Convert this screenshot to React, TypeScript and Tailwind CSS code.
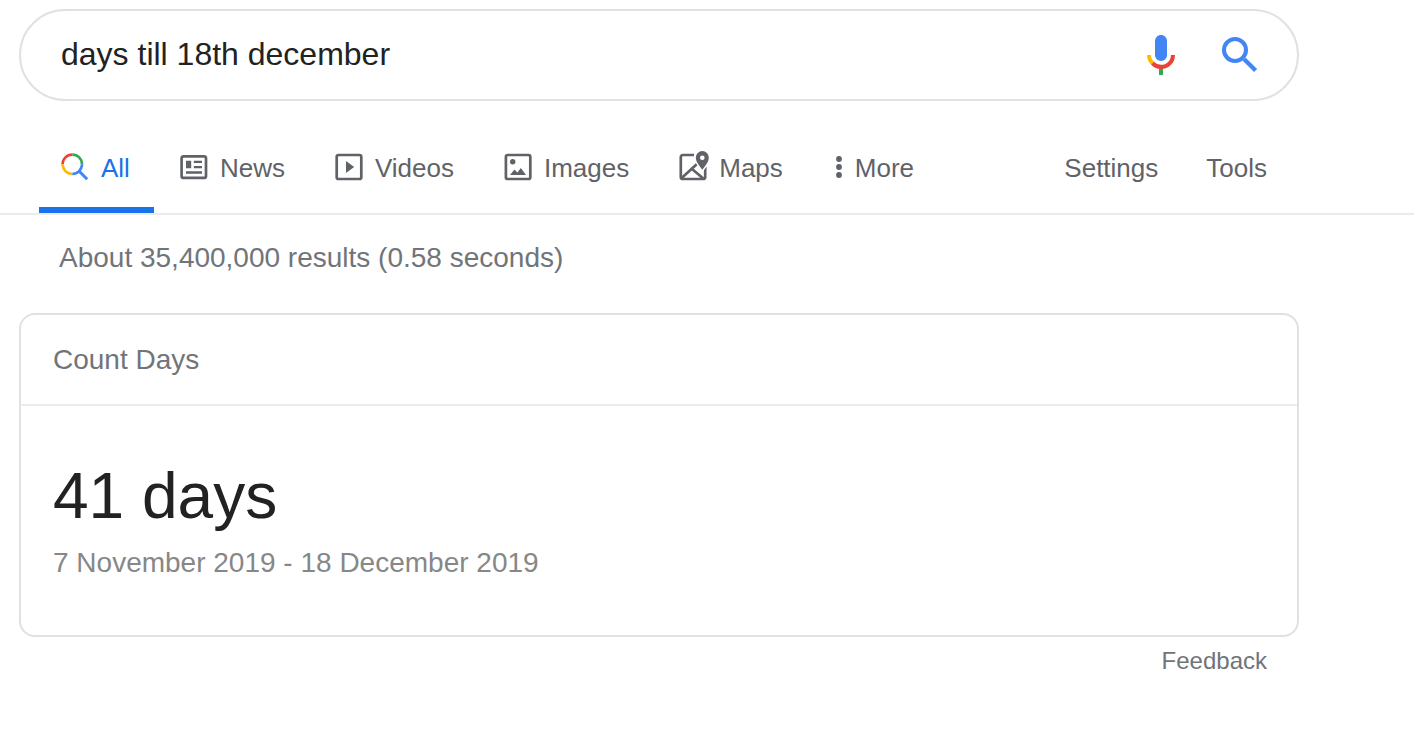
import type { ReactNode } from "react";

function MicIcon() {
  return (
    <svg className="size-12" viewBox="0 0 24 24" aria-hidden="true">
      <path fill="#4285f4" d="M12 15c1.66 0 3-1.31 3-2.97V4.99C15 3.33 13.66 2 12 2S9 3.33 9 4.99v7.04C9 13.69 10.34 15 12 15z" />
      <path fill="#34a853" d="M11 18.08h2V22h-2z" />
      <path fill="#fbbc05" d="M7.05 16.87C5.78 15.54 5 14.04 5 12h2c0 1.45.56 2.42 1.47 3.38v.32l-1.15 1.18z" />
      <path fill="#ea4335" d="M12 16.93a4.97 5.25 0 0 1-3.54-1.55l-1.41 1.49C8.31 18.21 10.07 19 12 19c3.87 0 6.99-2.92 6.99-7H17c0 2.92-2.24 4.93-5 4.93z" />
    </svg>
  );
}

function SearchIcon() {
  return (
    <svg className="size-12" viewBox="0 0 24 24" fill="none" stroke="#4285f4" aria-hidden="true">
      <circle cx="9.5" cy="9.5" r="5.5" strokeWidth="2" />
      <path d="M14.100 14.100l5.700 5.700" strokeWidth="2.150" />
    </svg>
  );
}

function Glyph({ children }: { children: ReactNode }) {
  return (
    <svg className="-mt-0.5 size-8 shrink-0" viewBox="0 0 32 32" fill="none" aria-hidden="true">
      {children}
    </svg>
  );
}

const allIcon = (
  <Glyph>
    <path d="M3.6 13.3a9.7 9.7 0 0 1 9.7-9.7" stroke="#ea4335" strokeWidth="2.6" />
    <path d="M13.3 3.6a9.7 9.7 0 0 1 9.7 9.7" stroke="#34a853" strokeWidth="2.6" />
    <path d="M13.3 23a9.7 9.7 0 0 1-9.7-9.7" stroke="#fbbc05" strokeWidth="2.6" />
    <path d="M23 13.3a9.7 9.7 0 0 1-9.7 9.7" stroke="#4285f4" strokeWidth="2.6" />
    <path d="M19.700 19.700l8.500 8.500" stroke="#4285f4" strokeWidth="3" />
  </Glyph>
);

const newsIcon = (
  <Glyph>
    <rect x="3.6" y="5.3" width="24.4" height="21.6" rx="2" stroke="#5f6368" strokeWidth="2.7" />
    <path fill="#5f6368" d="M8 9.7h5.2v7.6H8zM15.8 9.7H24V12h-8.2zM15.8 15H24v2.3h-8.2zM8 20.3h16v2.5H8z" />
  </Glyph>
);

const videosIcon = (
  <Glyph>
    <rect x="3.7" y="4" width="24.6" height="24" rx="1.8" stroke="#5f6368" strokeWidth="2.7" />
    <path fill="#5f6368" d="M13 10l8.2 6-8.2 6z" />
  </Glyph>
);

const imagesIcon = (
  <Glyph>
    <rect x="3.9" y="4" width="24.4" height="24" rx="1.8" stroke="#5f6368" strokeWidth="2.7" />
    <circle cx="10.7" cy="10.7" r="2.7" fill="#5f6368" />
    <path fill="#5f6368" d="M8 24l4.4-5.6 3 3.2 3.4-4.6L24 24z" />
  </Glyph>
);

const mapsIcon = (
  <Glyph>
    <path
      d="M17 4H5.8a2 2 0 0 0-2 2v20a2 2 0 0 0 2 2h20.400a2 2 0 0 0 2-2V16M4.400 27.200L20 13M13.800 17l12.500 10.500"
      stroke="#5f6368"
      strokeWidth="2.700"
    />
    <path
      d="M25.300 18.800c-3-3.900-6.500-8-6.500-12.200a6.500 6.500 0 0 1 13 0c0 4.200-3.500 8.300-6.500 12.200z"
      fill="#5f6368"
      stroke="#fff"
      strokeWidth="3"
      paintOrder="stroke"
    />
    <circle cx="25.300" cy="6.700" r="2.300" fill="#fff" />
  </Glyph>
);

const tabs = [
  { label: "News", icon: newsIcon },
  { label: "Videos", icon: videosIcon },
  { label: "Images", icon: imagesIcon },
  { label: "Maps", icon: mapsIcon },
];

const tabClass = "flex items-center gap-2.5 border-b-[6px] border-transparent px-6 pb-[21px]";

export default function App() {
  return (
    <div className="min-h-screen bg-white pt-[9px] font-['Liberation_Sans',Arial,sans-serif] text-[#222]">
      <form
        role="search"
        onSubmit={(event) => event.preventDefault()}
        className="ml-[19px] flex h-[92px] max-w-[1280px] items-center rounded-full border-2 border-[#dfe1e5] pr-[33px] pl-10"
      >
        <input
          type="text"
          aria-label="Search"
          defaultValue="days till 18th december"
          className="min-w-0 flex-1 bg-transparent pb-0.5 text-[32px] leading-10 outline-none"
        />
        <div className="flex gap-[31px]">
          <button type="button" aria-label="Search by voice">
            <MicIcon />
          </button>
          <button type="submit" aria-label="Submit search">
            <SearchIcon />
          </button>
        </div>
      </form>

      <div className="border-b-2 border-[#ebebeb] pt-[49px] text-[26px] leading-9 text-[#5f6368]">
        <div className="ml-[19px] flex max-w-[1280px] justify-between pr-8 pl-5">
          <nav aria-label="Result types" className="flex">
            <a
              href="#all"
              aria-current="page"
              className="flex items-center gap-2.5 border-b-[6px] border-[#1a73e8] pr-6 pb-[21px] pl-5 text-[#1a73e8]"
            >
              {allIcon}
              All
            </a>
            {tabs.map((tab) => (
              <a key={tab.label} href={`#${tab.label.toLowerCase()}`} className={tabClass}>
                {tab.icon}
                {tab.label}
              </a>
            ))}
            <button type="button" className="flex items-center gap-2 border-b-[6px] border-transparent pb-[21px] pl-6">
              <svg className="-mt-0.5 h-8 w-4 shrink-0" viewBox="0 0 16 32" fill="#5f6368" aria-hidden="true">
                <circle cx="8" cy="8" r="2.900" />
                <circle cx="8" cy="16" r="2.900" />
                <circle cx="8" cy="24" r="2.900" />
              </svg>
              More
            </button>
          </nav>
          <div className="flex items-start gap-12">
            <a href="#settings">Settings</a>
            <button type="button">Tools</button>
          </div>
        </div>
      </div>

      <main className="ml-[19px] max-w-[1280px]">
        <p className="pt-[27px] pl-10 text-[28px] leading-8 text-[#70757a]">
          About 35,400,000 results (0.58 seconds)
        </p>
        <section className="mt-[39px] rounded-2xl border-2 border-[#dfe1e5]">
          <h2 className="border-b-2 border-[#ebebeb] px-8 py-7 text-[28px] leading-[33px] text-[#70757a]">
            Count Days
          </h2>
          <div className="px-8 py-[54px]">
            <p className="text-[64px] leading-[72px]">41 days</p>
            <p className="mt-[13px] text-[28px] leading-9 text-[#878787]">7 November 2019 - 18 December 2019</p>
          </div>
        </section>
        <div className="mt-2 flex justify-end pr-8">
          <a href="#feedback" className="text-2xl leading-8 text-[#70757a]">
            Feedback
          </a>
        </div>
      </main>
    </div>
  );
}
